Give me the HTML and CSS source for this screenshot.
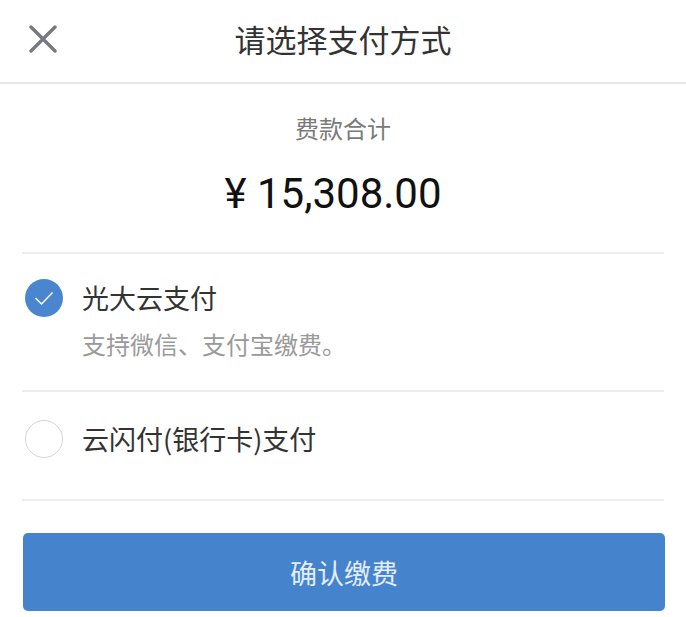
FILE: index.html
```html
<!DOCTYPE html>
<html lang="zh-CN">
<head>
    <meta charset="UTF-8">
    <meta name="viewport" content="width=device-width, initial-scale=1.0">
    <title>请选择支付方式</title>
    <link rel="stylesheet" href="styles.css">
</head>
<body>

    <div class="header">
        <button class="close-btn" aria-label="关闭">
            <svg width="28" height="28" viewBox="0 0 28 28">
                <path d="M2 2 L26 26 M26 2 L2 26" stroke="#76797d" stroke-width="3.4" fill="none" stroke-linecap="round"/>
            </svg>
        </button>
        <h1 class="title">请选择支付方式</h1>
        <div></div>
    </div>

    <div class="summary">
        <p class="summary-label">费款合计</p>
        <p class="summary-amount">¥ 15,308.00</p>
    </div>

    <div class="pay-list">
        <div class="pay-item">
            <div class="pay-row">
                <span class="radio checked">
                    <svg width="38" height="38" viewBox="0 0 38 38">
                        <path d="M10.5 19 L16.5 25 L27.5 13.5" stroke="#ffffff" stroke-width="1.4" fill="none"/>
                    </svg>
                </span>
                <span class="pay-name">光大云支付</span>
            </div>
            <p class="pay-desc">支持微信、支付宝缴费。</p>
        </div>

        <div class="pay-item last">
            <div class="pay-row">
                <span class="radio"></span>
                <span class="pay-name">云闪付(银行卡)支付</span>
            </div>
        </div>
    </div>

    <button class="confirm-btn">确认缴费</button>

</body>
</html>
```

FILE: styles.css
```css
body {
    font-family: "Noto Sans CJK SC", "Noto Sans", sans-serif;
    background-color: #fff;
    margin: 0;
    padding: 0;
    color: #333;
}

.header {
    display: grid;
    grid-template-columns: 1fr auto 1fr;
    align-items: center;
    height: 77px;
    padding-bottom: 5px;
    border-bottom: 2px solid #e8e8e8;
}

.close-btn {
    justify-self: start;
    margin-left: 29px;
    padding: 0;
    border: none;
    background: none;
    width: 28px;
    height: 28px;
    cursor: pointer;
}

.close-btn svg {
    display: block;
}

.title {
    margin: 0;
    font-size: 31px;
    font-weight: normal;
    line-height: 40px;
    color: #333;
}

.summary {
    margin: 0 22px;
    padding: 28px 0 30px;
    text-align: center;
    border-bottom: 2px solid #ececec;
}

.summary-label {
    margin: 0;
    font-size: 24px;
    line-height: 32px;
    color: #7a7a7a;
}

.summary-amount {
    margin: 22px 0 0;
    padding-right: 20px;
    font-family: Roboto, "Noto Sans CJK SC", sans-serif;
    font-size: 42px;
    line-height: 56px;
    color: #111;
}

.pay-list {
    margin: 0 22px;
}

.pay-item {
    padding: 26px 0 30px 3px;
    border-bottom: 2px solid #ececec;
}

.pay-item.last {
    padding: 29px 0 42px 3px;
}

.pay-row {
    display: flex;
    align-items: center;
    gap: 19px;
    height: 36px;
}

.radio {
    box-sizing: border-box;
    width: 38px;
    height: 38px;
    border-radius: 50%;
    border: 1.5px solid #d6d6d6;
    flex-shrink: 0;
}

.radio.checked {
    border: none;
    background-color: #4a86cf;
}

.radio svg {
    display: block;
}

.pay-name {
    font-size: 27px;
    line-height: 36px;
    color: #333;
}

.pay-desc {
    margin: 12px 0 0 57px;
    font-size: 24px;
    line-height: 32px;
    color: #9a9a9a;
}

.confirm-btn {
    display: block;
    box-sizing: border-box;
    width: calc(100% - 44px);
    height: 78px;
    margin: 32px 22px 0 23px;
    border: none;
    border-radius: 5px;
    background-color: #4584cc;
    color: #e3edf8;
    font-family: "Noto Sans CJK SC", sans-serif;
    font-size: 27px;
    cursor: pointer;
}
```
